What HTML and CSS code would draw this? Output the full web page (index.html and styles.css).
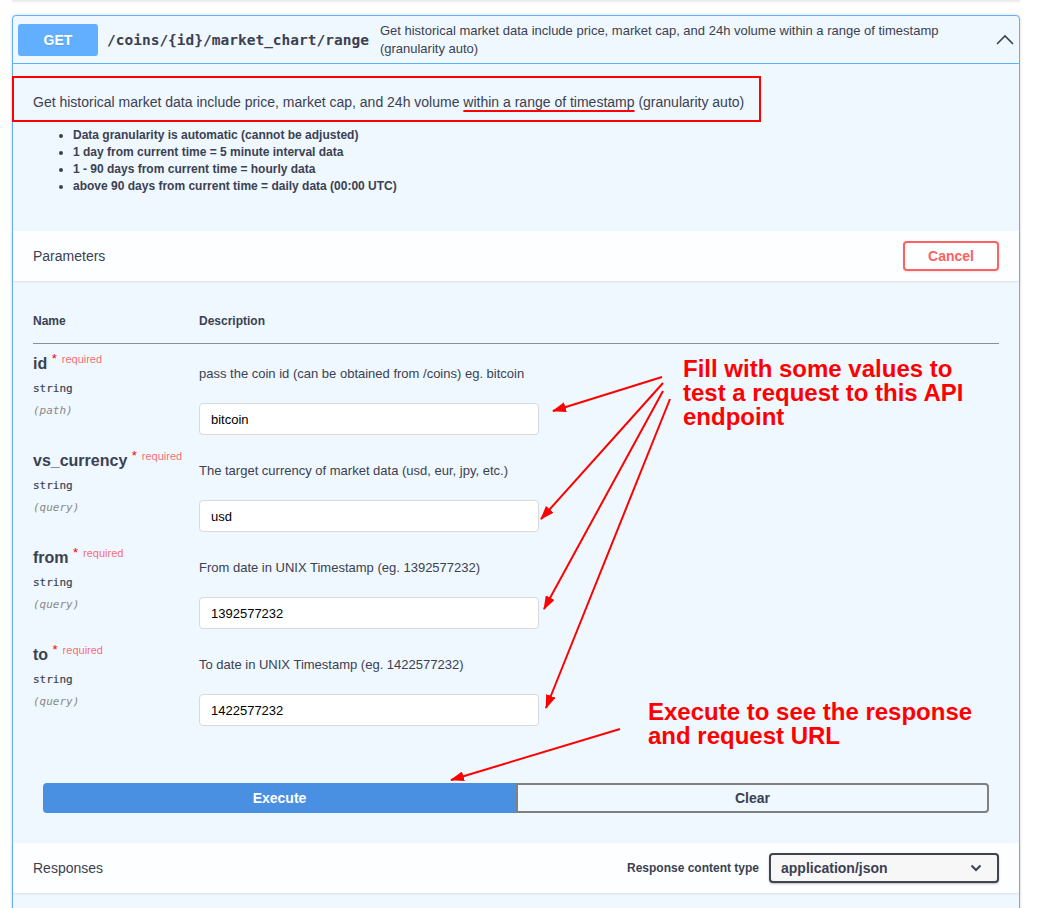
FILE: index.html
```html
<!DOCTYPE html>
<html lang="en">
<head>
<meta charset="utf-8">
<title>GET /coins/{id}/market_chart/range</title>
<link rel="stylesheet" href="styles.css">
</head>
<body>
<div class="page">
  <div class="prev"></div>
  <div class="opblock">
    <div class="summary">
      <span class="method">GET</span>
      <span class="path">/coins/{id}/market_chart/range</span>
      <div class="summary-desc">Get historical market data include price, market cap, and 24h volume within a range of timestamp (granularity auto)</div>
      <svg class="chev-up" width="18" height="11" viewBox="0 0 18 11"><polyline points="1,10 9,2 17,10" fill="none" stroke="#3b4151" stroke-width="1.6"/></svg>
    </div>

    <div class="desc-wrapper">
      <p class="desc-main">Get historical market data include price, market cap, and 24h volume <span class="hl">within a range of timestamp</span> (granularity auto)</p>
      <ul class="notes">
        <li>Data granularity is automatic (cannot be adjusted)</li>
        <li>1 day from current time = 5 minute interval data</li>
        <li>1 - 90 days from current time = hourly data</li>
        <li>above 90 days from current time = daily data (00:00 UTC)</li>
      </ul>
    </div>
    <div class="redbox"></div>

    <div class="section-header">
      <span class="section-title">Parameters</span>
      <button class="btn-cancel">Cancel</button>
    </div>

    <div class="table-container">
      <table class="params">
        <thead>
          <tr><th class="col-name">Name</th><th>Description</th></tr>
        </thead>
        <tbody>
          <tr>
            <td class="col-name">
              <div class="pname">id <span class="ast">*</span><span class="req">required</span></div>
              <div class="ptype">string</div>
              <div class="pin">(path)</div>
            </td>
            <td>
              <p class="pdesc">pass the coin id (can be obtained from /coins) eg. bitcoin</p>
              <div class="input">bitcoin</div>
            </td>
          </tr>
          <tr>
            <td class="col-name">
              <div class="pname">vs_currency <span class="ast">*</span><span class="req">required</span></div>
              <div class="ptype">string</div>
              <div class="pin">(query)</div>
            </td>
            <td>
              <p class="pdesc">The target currency of market data (usd, eur, jpy, etc.)</p>
              <div class="input">usd</div>
            </td>
          </tr>
          <tr>
            <td class="col-name">
              <div class="pname">from <span class="ast">*</span><span class="req">required</span></div>
              <div class="ptype">string</div>
              <div class="pin">(query)</div>
            </td>
            <td>
              <p class="pdesc">From date in UNIX Timestamp (eg. 1392577232)</p>
              <div class="input">1392577232</div>
            </td>
          </tr>
          <tr>
            <td class="col-name">
              <div class="pname">to <span class="ast">*</span><span class="req">required</span></div>
              <div class="ptype">string</div>
              <div class="pin">(query)</div>
            </td>
            <td>
              <p class="pdesc">To date in UNIX Timestamp (eg. 1422577232)</p>
              <div class="input">1422577232</div>
            </td>
          </tr>
        </tbody>
      </table>
    </div>

    <div class="execute-wrapper">
      <button class="btn-execute">Execute</button>
      <button class="btn-clear">Clear</button>
    </div>

    <div class="section-header">
      <span class="section-title">Responses</span>
      <div class="ctype">
        <span class="ctype-label">Response content type</span>
        <div class="select">
          <span>application/json</span>
          <svg width="12" height="8" viewBox="0 0 12 8"><polyline points="1.5,1.5 6,6 10.5,1.5" fill="none" stroke="#3b4151" stroke-width="2"/></svg>
        </div>
      </div>
    </div>
    <div class="responses-body"></div>
  </div>

  <div class="note note-fill">Fill with some values to<br>test a request to this API<br>endpoint</div>
  <div class="note note-exec">Execute to see the response<br>and request URL</div>

  <svg class="arrows" width="1042" height="908" viewBox="0 0 1042 908">
    <defs>
      <marker id="ah" markerWidth="14" markerHeight="10" refX="13" refY="5" orient="auto" markerUnits="userSpaceOnUse">
        <path d="M0,0 L14,5 L0,10 Z" fill="#ff0000"/>
      </marker>
    </defs>
    <g stroke="#ff0000" stroke-width="2" fill="none">
      <line x1="662" y1="377" x2="553" y2="411" marker-end="url(#ah)"/>
      <line x1="663" y1="383" x2="541" y2="519" marker-end="url(#ah)"/>
      <line x1="663" y1="391" x2="544" y2="609" marker-end="url(#ah)"/>
      <line x1="670" y1="399" x2="546" y2="708" marker-end="url(#ah)"/>
      <line x1="620" y1="729" x2="451" y2="780" marker-end="url(#ah)"/>
    </g>
  </svg>
</div>
</body>
</html>
```

FILE: styles.css
```css
html, body {
  margin: 0;
  padding: 0;
  height: 908px;
  overflow: hidden;
  background: #fff;
}
body {
  font-family: "Liberation Sans", Arial, sans-serif;
  color: #3b4151;
}
.page {
  position: relative;
  padding: 0 22px 0 12px;
  height: 908px;
}
.prev {
  height: 1px;
  background: #ececec;
  box-shadow: 0 1px 2px rgba(0,0,0,.12);
}
.opblock {
  position: relative;
  margin-top: 14px;
  border: 1px solid #61affe;
  border-radius: 4px;
  background: #eff7ff;
  box-shadow: 0 0 3px rgba(0,0,0,.19);
}
.summary {
  display: flex;
  align-items: center;
  height: 47px;
  padding: 0 5px;
  border-bottom: 1px solid #61affe;
}
.method {
  flex: none;
  width: 80px;
  height: 32px;
  display: flex;
  align-items: center;
  justify-content: center;
  background: #61affe;
  color: #fff;
  font-weight: bold;
  font-size: 14px;
  border-radius: 3px;
  text-shadow: 0 1px 0 rgba(0,0,0,.1);
}
.path {
  flex: none;
  font-family: "DejaVu Sans Mono", monospace;
  font-weight: bold;
  font-size: 14.5px;
  padding: 0 11px 0 9px;
  color: #3b4151;
}
.summary-desc {
  flex: 1;
  font-size: 13px;
  line-height: 18px;
  padding-right: 8px;
}
.chev-up {
  flex: none;
  margin-left: auto;
}
.desc-wrapper {
  padding: 15px 20px 15px;
}
.desc-main {
  margin: 14px 0 0;
  font-size: 14px;
  line-height: 19px;
}
.hl {
  text-decoration: underline;
  text-decoration-color: #ff0000;
  text-decoration-thickness: 2px;
  text-underline-offset: 3px;
}
.notes {
  margin: 15px 0 21px;
  padding-left: 40px;
  font-size: 12px;
  font-weight: bold;
  line-height: 17px;
}
.redbox {
  position: absolute;
  left: -1px;
  top: 60px;
  width: 749px;
  height: 46px;
  border: 2px solid #ff0000;
  box-sizing: border-box;
}
.section-header {
  display: flex;
  align-items: center;
  justify-content: space-between;
  height: 50px;
  padding: 0 20px;
  background: rgba(255,255,255,.8);
  box-shadow: 0 1px 2px rgba(0,0,0,.1);
}
.section-title {
  font-size: 14px;
}
.btn-cancel {
  width: 96px;
  height: 30px;
  border: 2px solid #ff6060;
  border-radius: 4px;
  background: transparent;
  color: #ff6060;
  font-family: "Liberation Sans", Arial, sans-serif;
  font-weight: bold;
  font-size: 14px;
  box-shadow: 0 1px 2px rgba(0,0,0,.1);
}
.table-container {
  padding: 20px;
}
.params {
  width: 100%;
  border-collapse: collapse;
}
.params th {
  text-align: left;
  font-size: 12px;
  font-weight: bold;
  line-height: 14px;
  padding: 13px 0 15px;
  border-bottom: 1px solid rgba(59,65,81,.35);
}
.col-name {
  width: 166px;
}
.params td {
  vertical-align: top;
  padding: 10px 0 6px;
}
.pname {
  font-size: 16px;
  font-weight: bold;
  line-height: 20px;
  white-space: nowrap;
}
.ast {
  color: #ff0000;
  font-size: 13px;
  font-weight: normal;
  position: relative;
  top: -6px;
}
.req {
  color: rgba(255,0,0,.6);
  font-size: 11px;
  font-weight: normal;
  position: relative;
  top: -6px;
  margin-left: 5px;
}
.ptype {
  margin-top: 7px;
  font-family: "DejaVu Sans Mono", monospace;
  font-size: 11px;
  font-weight: normal;
  line-height: 14px;
  color: #3b4151;
  -webkit-text-stroke: 0.2px #3b4151;
}
.pin {
  margin-top: 8px;
  font-family: "DejaVu Sans Mono", monospace;
  font-size: 11px;
  font-style: italic;
  line-height: 14px;
  color: #888;
}
.pdesc {
  margin: 11px 0 0;
  width: fit-content;
  font-size: 13px;
  line-height: 18px;
}
.input {
  margin-top: 20px;
  width: 340px;
  height: 32px;
  box-sizing: border-box;
  padding: 0 11px;
  display: flex;
  align-items: center;
  background: #fff;
  border: 1px solid #d9d9d9;
  border-radius: 4px;
  font-size: 13px;
  color: #000;
}
.execute-wrapper {
  display: flex;
  padding: 31px 30px 30px;
}
.btn-execute, .btn-clear {
  flex: 1;
  height: 30px;
  font-family: "Liberation Sans", Arial, sans-serif;
  font-weight: bold;
  font-size: 14px;
}
.btn-execute {
  background: #4990e2;
  border: 2px solid #4990e2;
  border-radius: 4px 0 0 4px;
  color: #fff;
}
.btn-clear {
  background: transparent;
  border: 2px solid #808080;
  border-radius: 0 4px 4px 0;
  color: #3b4151;
}
.ctype {
  display: flex;
  align-items: center;
}
.ctype-label {
  font-size: 12px;
  font-weight: bold;
  margin-right: 10px;
}
.select {
  width: 230px;
  height: 30px;
  box-sizing: border-box;
  display: flex;
  align-items: center;
  justify-content: space-between;
  padding: 0 15px 0 10px;
  border: 2px solid #41444e;
  border-radius: 4px;
  background: #f7f7f7;
  box-shadow: 0 1px 2px rgba(0,0,0,.25);
  font-size: 14px;
  font-weight: bold;
}
.responses-body {
  height: 80px;
}
.note {
  position: absolute;
  color: #ff0000;
  font-weight: bold;
  font-size: 24px;
  line-height: 24px;
}
.note-fill {
  left: 683px;
  top: 357px;
}
.note-exec {
  left: 648px;
  top: 700px;
}
.arrows {
  position: absolute;
  left: 0;
  top: 0;
  pointer-events: none;
}
```
